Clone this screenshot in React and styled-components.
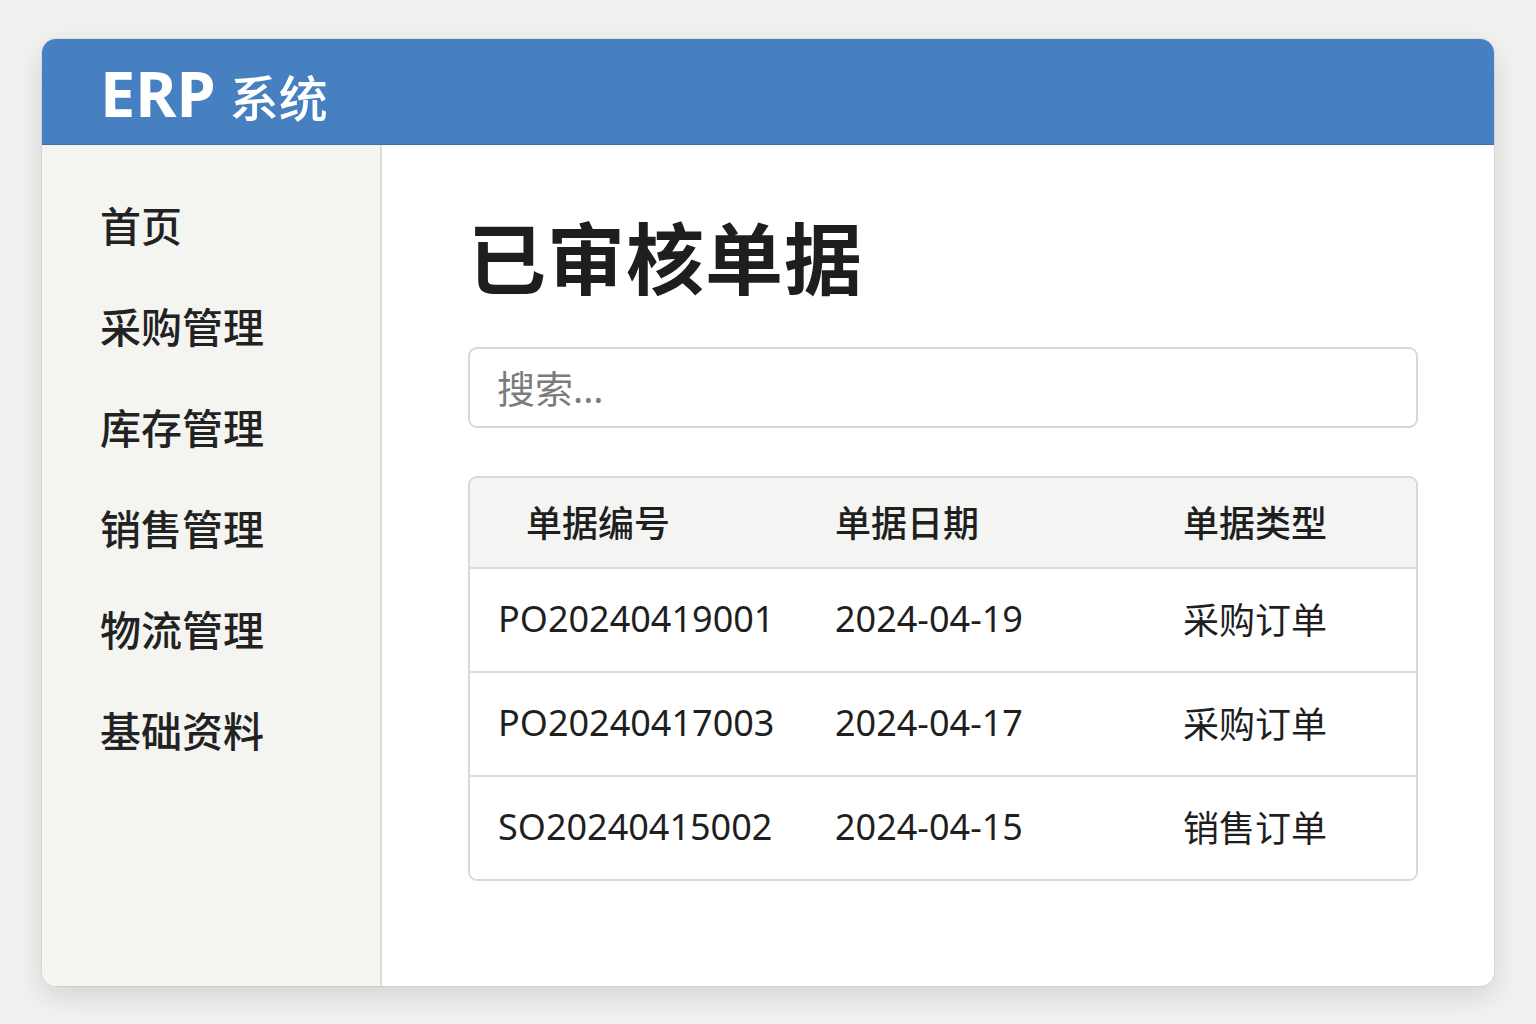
import React from "react";
import styled, { createGlobalStyle } from "styled-components";

const GlobalStyle = createGlobalStyle`
  body {
    margin: 0;
    background: #f1f1f0;
    font-family: "Noto Sans", "Noto Sans CJK SC", sans-serif;
  }
`

const Page = styled.div`
  width: 1536px;
  height: 1024px;
  padding: 39px 42px 0 42px;
  box-sizing: border-box;
`
const Card = styled.div`
  height: 947px;
  border-radius: 14px;
  overflow: hidden;
  background: #fff;
  box-shadow: 0 10px 28px rgba(0, 0, 0, 0.13), 0 0 0 1px rgba(0, 0, 0, 0.05);
  display: flex;
  flex-direction: column;
`
const Header = styled.div`
  height: 106px;
  flex-shrink: 0;
  background: #4680c0;
  display: flex;
  align-items: center;
  padding-left: 58px;
  border-bottom: 1px solid #3d70a8;
  box-sizing: border-box;
`
const Logo = styled.div`
  color: #fff;
  font-size: 63px;
  font-weight: 700;
  display: flex;
  align-items: baseline;
  gap: 14px;
  margin-top: 2px;
`
const LogoSub = styled.span`
  font-weight: 500;
  font-size: 49px;
`
const Body = styled.div`
  flex: 1;
  display: flex;
`
const Sidebar = styled.div`
  width: 340px;
  background: #f4f4f1;
  border-right: 2px solid #dcdcda;
  padding: 55px 0 0 58px;
  box-sizing: border-box;
  display: flex;
  flex-direction: column;
  gap: 49px;
`
const NavItem = styled.div`
  font-size: 41px;
  font-weight: 500;
  color: #222;
  line-height: 52px;
`
const Main = styled.div`
  flex: 1;
  padding: 67px 76px 0 86px;
  display: flex;
  flex-direction: column;
`
const Title = styled.h1`
  margin: 0 0 41px 0;
  font-size: 78px;
  font-weight: 700;
  color: #1e1e1e;
  line-height: 94px;
  letter-spacing: 1px;
`
const Search = styled.input`
  height: 81px;
  border: 2px solid #d8d8d6;
  border-radius: 9px;
  padding: 0 27px;
  font-size: 38px;
  font-family: inherit;
  color: #333;
  box-sizing: border-box;
  outline: none;
  &::placeholder {
    color: #7c7c7c;
  }
`
const Table = styled.div`
  margin-top: 48px;
  border: 2px solid #d8d8d6;
  border-radius: 9px;
  overflow: hidden;
`
const Row = styled.div`
  display: grid;
  grid-template-columns: 337px 348px 1fr;
  align-items: center;
  height: ${p => (p.head ? "89px" : "104px")};
  background: ${p => (p.head ? "#f4f4f2" : "#fff")};
  border-top: ${p => (p.first ? "none" : "2px solid #dcdcda")};
  box-sizing: border-box;
`
const Cell = styled.div`
  padding-left: ${p => p.pad || 28}px;
  font-size: 36px;
  font-weight: ${p => (p.head ? 500 : 400)};
  color: #1f1f1f;
  white-space: nowrap;
  margin-top: ${p => (p.head ? "-2px" : "-4px")};
`

const nav = ["首页", "采购管理", "库存管理", "销售管理", "物流管理", "基础资料"];
const rows = [
  ["PO20240419001", "2024-04-19", "采购订单"],
  ["PO20240417003", "2024-04-17", "采购订单"],
  ["SO20240415002", "2024-04-15", "销售订单"],
];

export default function App() {
  return (
    <Page>
      <GlobalStyle />
      <Card>
        <Header>
          <Logo>ERP<LogoSub>系统</LogoSub></Logo>
        </Header>
        <Body>
          <Sidebar>
            {nav.map(n => <NavItem key={n}>{n}</NavItem>)}
          </Sidebar>
          <Main>
            <Title>已审核单据</Title>
            <Search placeholder="搜索..." />
            <Table>
              <Row head first>
                <Cell head pad={56}>单据编号</Cell>
                <Cell head>单据日期</Cell>
                <Cell head>单据类型</Cell>
              </Row>
              {rows.map(r => (
                <Row key={r[0]}>
                  <Cell>{r[0]}</Cell>
                  <Cell>{r[1]}</Cell>
                  <Cell>{r[2]}</Cell>
                </Row>
              ))}
            </Table>
          </Main>
        </Body>
      </Card>
    </Page>
  );
}
